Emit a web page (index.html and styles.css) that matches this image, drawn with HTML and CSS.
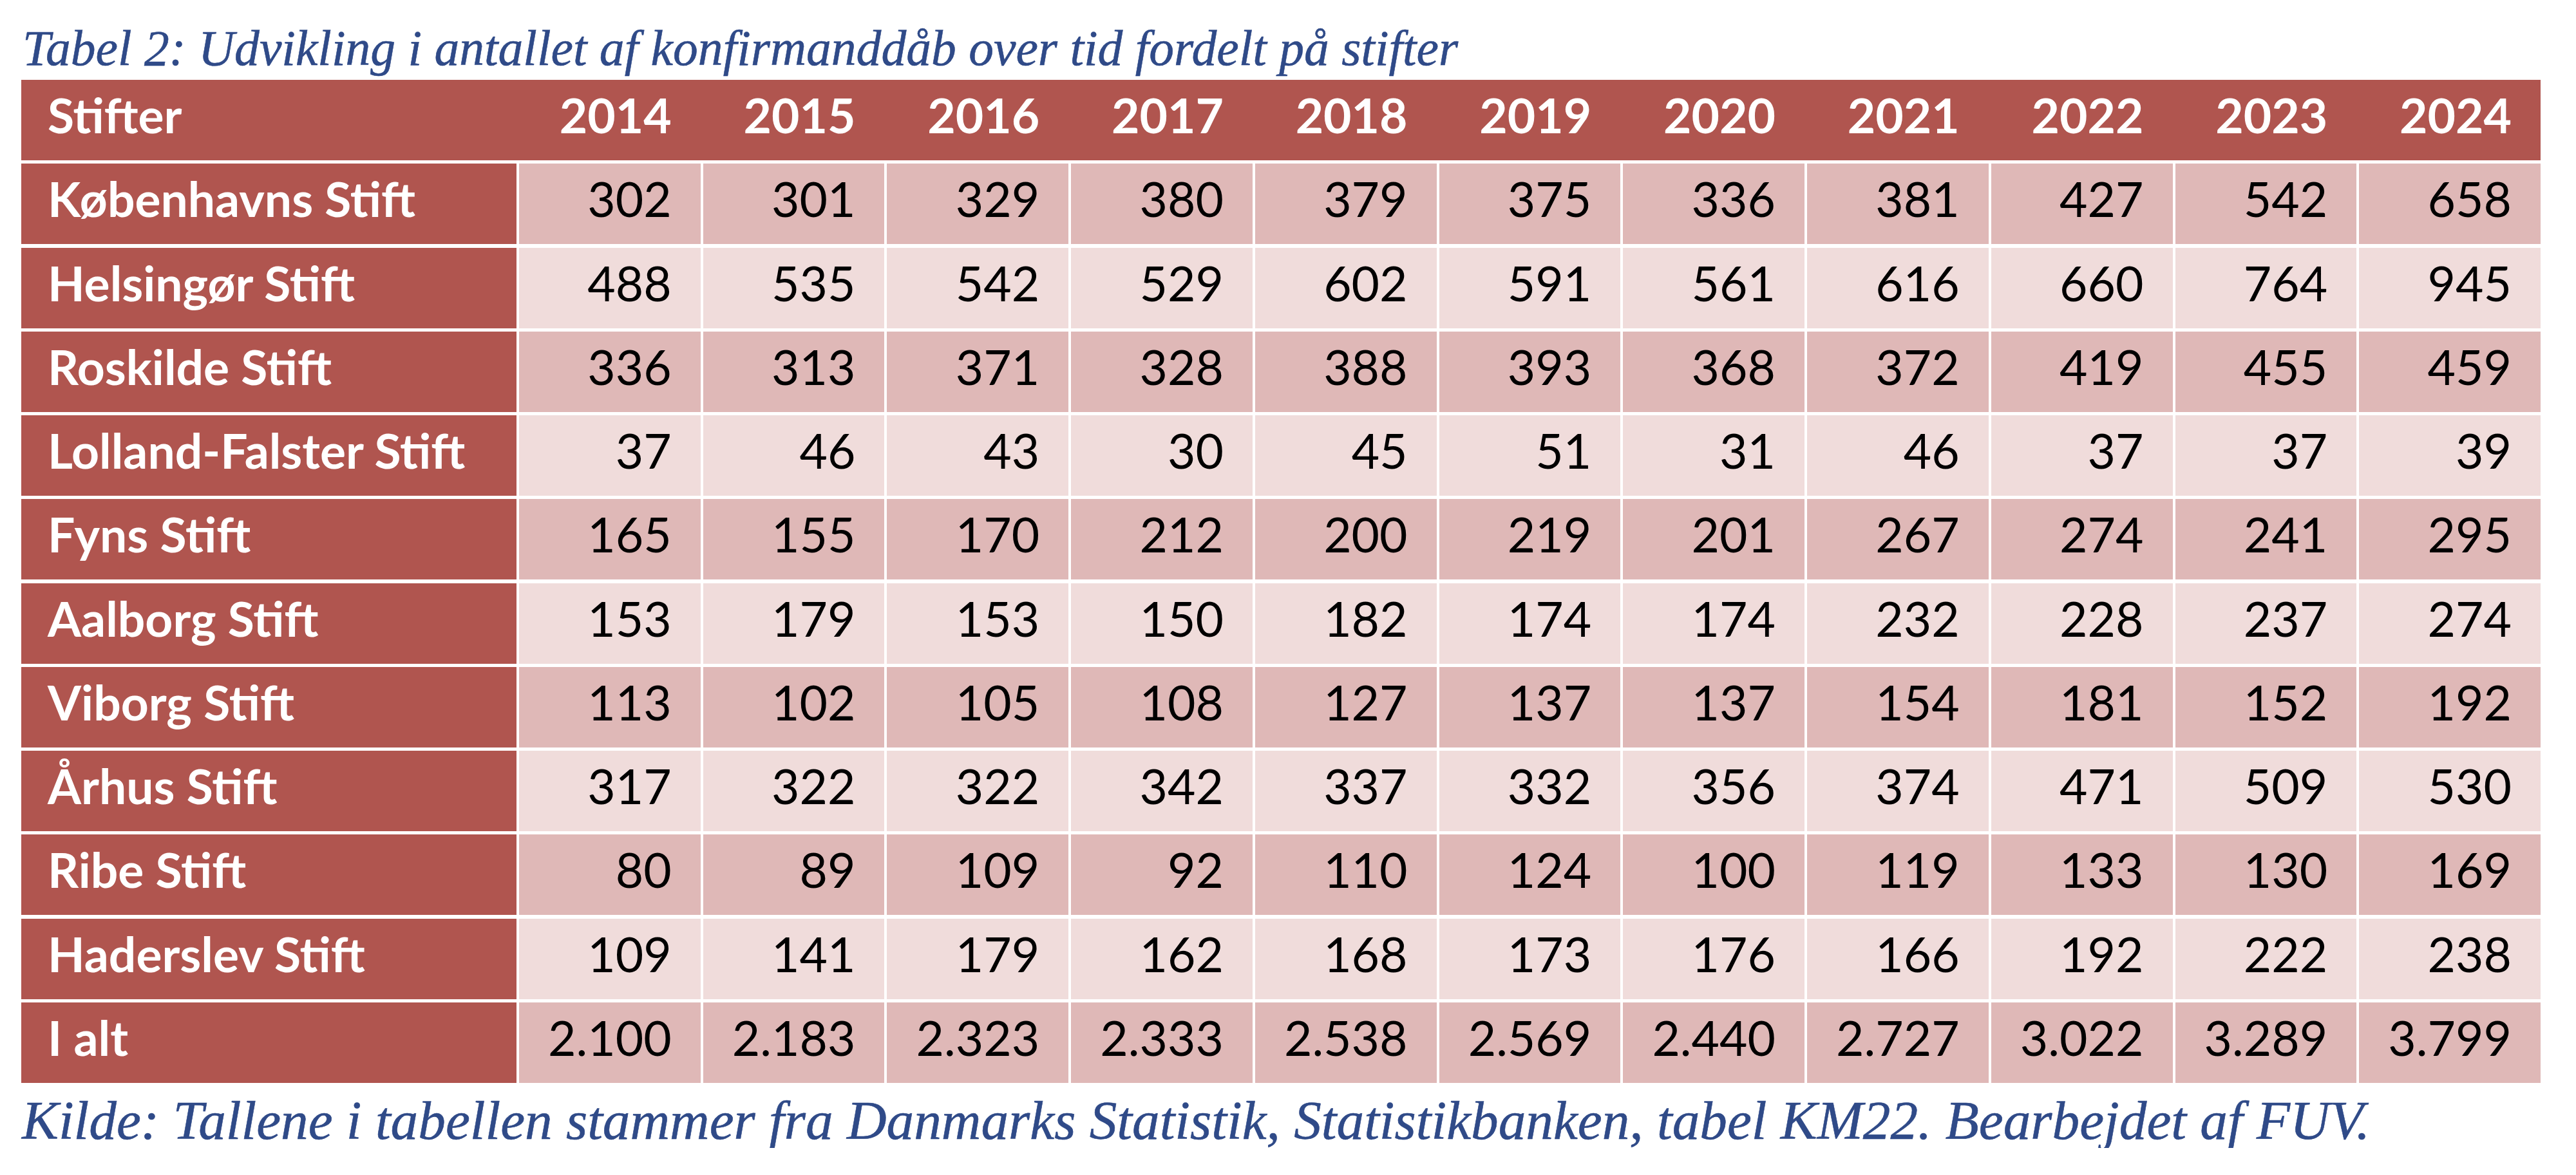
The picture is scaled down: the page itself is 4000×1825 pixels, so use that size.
FILE: index.html
```html
<!DOCTYPE html>
<html lang="da">
<head>
<meta charset="utf-8">
<title>Tabel 2</title>
<link rel="stylesheet" href="styles.css">
</head>
<body>
<div class="page">
  <p class="caption">Tabel 2: Udvikling i antallet af konfirmanddåb over tid fordelt på stifter</p>
  <div class="tbl">
    <div class="c hd first">Stifter</div>
    <div class="c hd">2014</div><div class="c hd">2015</div><div class="c hd">2016</div><div class="c hd">2017</div><div class="c hd">2018</div><div class="c hd">2019</div><div class="c hd">2020</div><div class="c hd">2021</div><div class="c hd">2022</div><div class="c hd">2023</div><div class="c hd">2024</div>

    <div class="c rh">Københavns Stift</div>
    <div class="c n dk">302</div><div class="c n dk">301</div><div class="c n dk">329</div><div class="c n dk">380</div><div class="c n dk">379</div><div class="c n dk">375</div><div class="c n dk">336</div><div class="c n dk">381</div><div class="c n dk">427</div><div class="c n dk">542</div><div class="c n dk">658</div>

    <div class="c rh">Helsingør Stift</div>
    <div class="c n lt">488</div><div class="c n lt">535</div><div class="c n lt">542</div><div class="c n lt">529</div><div class="c n lt">602</div><div class="c n lt">591</div><div class="c n lt">561</div><div class="c n lt">616</div><div class="c n lt">660</div><div class="c n lt">764</div><div class="c n lt">945</div>

    <div class="c rh">Roskilde Stift</div>
    <div class="c n dk">336</div><div class="c n dk">313</div><div class="c n dk">371</div><div class="c n dk">328</div><div class="c n dk">388</div><div class="c n dk">393</div><div class="c n dk">368</div><div class="c n dk">372</div><div class="c n dk">419</div><div class="c n dk">455</div><div class="c n dk">459</div>

    <div class="c rh">Lolland-Falster Stift</div>
    <div class="c n lt">37</div><div class="c n lt">46</div><div class="c n lt">43</div><div class="c n lt">30</div><div class="c n lt">45</div><div class="c n lt">51</div><div class="c n lt">31</div><div class="c n lt">46</div><div class="c n lt">37</div><div class="c n lt">37</div><div class="c n lt">39</div>

    <div class="c rh">Fyns Stift</div>
    <div class="c n dk">165</div><div class="c n dk">155</div><div class="c n dk">170</div><div class="c n dk">212</div><div class="c n dk">200</div><div class="c n dk">219</div><div class="c n dk">201</div><div class="c n dk">267</div><div class="c n dk">274</div><div class="c n dk">241</div><div class="c n dk">295</div>

    <div class="c rh">Aalborg Stift</div>
    <div class="c n lt">153</div><div class="c n lt">179</div><div class="c n lt">153</div><div class="c n lt">150</div><div class="c n lt">182</div><div class="c n lt">174</div><div class="c n lt">174</div><div class="c n lt">232</div><div class="c n lt">228</div><div class="c n lt">237</div><div class="c n lt">274</div>

    <div class="c rh">Viborg Stift</div>
    <div class="c n dk">113</div><div class="c n dk">102</div><div class="c n dk">105</div><div class="c n dk">108</div><div class="c n dk">127</div><div class="c n dk">137</div><div class="c n dk">137</div><div class="c n dk">154</div><div class="c n dk">181</div><div class="c n dk">152</div><div class="c n dk">192</div>

    <div class="c rh">Århus Stift</div>
    <div class="c n lt">317</div><div class="c n lt">322</div><div class="c n lt">322</div><div class="c n lt">342</div><div class="c n lt">337</div><div class="c n lt">332</div><div class="c n lt">356</div><div class="c n lt">374</div><div class="c n lt">471</div><div class="c n lt">509</div><div class="c n lt">530</div>

    <div class="c rh">Ribe Stift</div>
    <div class="c n dk">80</div><div class="c n dk">89</div><div class="c n dk">109</div><div class="c n dk">92</div><div class="c n dk">110</div><div class="c n dk">124</div><div class="c n dk">100</div><div class="c n dk">119</div><div class="c n dk">133</div><div class="c n dk">130</div><div class="c n dk">169</div>

    <div class="c rh">Haderslev Stift</div>
    <div class="c n lt">109</div><div class="c n lt">141</div><div class="c n lt">179</div><div class="c n lt">162</div><div class="c n lt">168</div><div class="c n lt">173</div><div class="c n lt">176</div><div class="c n lt">166</div><div class="c n lt">192</div><div class="c n lt">222</div><div class="c n lt">238</div>

    <div class="c rh">I alt</div>
    <div class="c n dk">2.100</div><div class="c n dk">2.183</div><div class="c n dk">2.323</div><div class="c n dk">2.333</div><div class="c n dk">2.538</div><div class="c n dk">2.569</div><div class="c n dk">2.440</div><div class="c n dk">2.727</div><div class="c n dk">3.022</div><div class="c n dk">3.289</div><div class="c n dk">3.799</div>
  </div>
  <p class="source">Kilde: Tallene i tabellen stammer fra Danmarks Statistik, Statistikbanken, tabel KM22. Bearbejdet af FUV.</p>
</div>
</body>
</html>
```

FILE: styles.css
```css
html, body {
  margin: 0;
  padding: 0;
  background: #ffffff;
}

.page {
  padding: 36px 0 0 33px;
}

.caption {
  margin: 0 0 10px 2px;
  font-family: "Liberation Serif", "Times New Roman", serif;
  font-style: italic;
  font-size: 77.6px;
  line-height: 78px;
  color: #2f4a88;
  -webkit-text-stroke: 0.6px #2f4a88;
  white-space: nowrap;
}

.tbl {
  display: grid;
  grid-template-columns: 769px repeat(11, 1fr);
  grid-auto-rows: 125px;
  row-gap: 5.27px;
  width: 3912px;
  background: #ffffff;
  font-family: Lato, "Open Sans", sans-serif;
  font-size: 75px;
  line-height: 90px;
}

.c {
  box-sizing: border-box;
  padding-top: 9px;
  white-space: nowrap;
}

.hd {
  background: #b0554f;
  color: #ffffff;
  font-weight: 700;
  text-align: right;
  padding-right: 45px;
}

.hd.first {
  text-align: left;
  padding-left: 41px;
  padding-right: 0;
}

.rh {
  background: #b0554f;
  color: #ffffff;
  font-weight: 700;
  padding-left: 41px;
}

.n {
  border-left: 4px solid #ffffff;
  color: #000000;
  text-align: right;
  padding-right: 45px;
}

.dk {
  background: #dfb8b7;
}

.lt {
  background: #f0dcdb;
}

.source {
  margin: 15px 0 0 1px;
  font-family: "Liberation Serif", "Times New Roman", serif;
  font-style: italic;
  font-size: 85.3px;
  line-height: 86px;
  color: #2f4a88;
  -webkit-text-stroke: 0.6px #2f4a88;
  white-space: nowrap;
}
```
